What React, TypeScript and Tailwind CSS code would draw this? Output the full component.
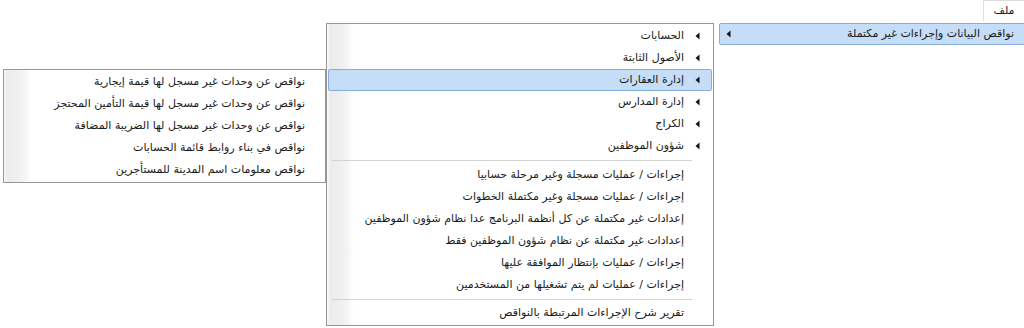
import React from "react";

const Arrow = () => (
  <svg width="5" height="8" viewBox="0 0 5 8" className="block">
    <path d="M4.5 0.5 L0.5 4 L4.5 7.5 Z" fill="#111" />
  </svg>
);

const level2Top = [
  "الحسابات",
  "الأصول الثابتة",
  "إدارة العقارات",
  "إدارة المدارس",
  "الكراج",
  "شؤون الموظفين",
];

const level2Mid = [
  "إجراءات / عمليات مسجلة وغير مرحلة حسابيا",
  "إجراءات / عمليات مسجلة وغير مكتملة الخطوات",
  "إعدادات غير مكتملة عن كل أنظمة البرنامج عدا نظام شؤون الموظفين",
  "إعدادات غير مكتملة عن نظام شؤون الموظفين فقط",
  "إجراءات / عمليات بإنتظار الموافقة عليها",
  "إجراءات / عمليات لم يتم تشغيلها من المستخدمين",
];

const level3 = [
  "نواقص عن وحدات غير مسجل لها قيمة إيجارية",
  "نواقص عن وحدات غير مسجل لها قيمة التأمين المحتجز",
  "نواقص عن وحدات غير مسجل لها الضريبة المضافة",
  "نواقص في بناء روابط قائمة الحسابات",
  "نواقص معلومات اسم المدينة للمستأجرين",
];

const gutter =
  "bg-[linear-gradient(to_right,#fafafa_0px,#ececec_3px,#efefef_14px,#f6f6f6_22px,#ffffff_26px)]";

export default function App() {
  return (
    <div
      className="relative w-[1024px] h-[328px] bg-white overflow-hidden text-[11px] text-[#1a1a1a]"
      style={{ fontFamily: '"DejaVu Sans", Tahoma, sans-serif' }}
    >
      {/* menu bar */}
      <div className="flex justify-end">
        <div className="w-[41px] h-[21px] border-t border-l border-[#dedede] flex items-center justify-center pt-px" dir="rtl">
          ملف
        </div>
      </div>

      {/* level 1 */}
      <div className="absolute left-[719px] top-[23px] w-[310px]" dir="rtl">
        <div className="h-[22px] bg-[#c5ddf6] border border-[#86aedd] rounded-[2px] flex items-center pr-[14px] pl-[6px]">
          <span className="flex-1">نواقص البيانات وإجراءات غير مكتملة</span>
          <Arrow />
        </div>
      </div>

      {/* level 2 */}
      <div
        className={`absolute left-[326px] top-[23px] w-[388px] border border-[#979797] bg-white ${gutter} p-[1px]`}
        dir="rtl"
      >
        {level2Top.map((t, i) => (
          <div
            key={t}
            className={
              i === 2
                ? "h-[22px] flex items-center border border-[#86aedd] bg-[#c5ddf6] rounded-[2px]"
                : "h-[22px] flex items-center border border-transparent"
            }
          >
            <div className="w-[27px] flex justify-center shrink-0">
              <Arrow />
            </div>
            <span>{t}</span>
          </div>
        ))}
        <div className="h-[7px] flex items-center pl-[4px] pr-[20px]">
          <div className="h-px w-full bg-[#d2d2d2]" />
        </div>
        {level2Mid.map((t) => (
          <div key={t} className="h-[22px] flex items-center pr-[28px]">
            <span>{t}</span>
          </div>
        ))}
        <div className="h-[6px] flex items-center pl-[4px] pr-[20px]">
          <div className="h-px w-full bg-[#d2d2d2]" />
        </div>
        <div className="h-[22px] flex items-center pr-[28px]">
          <span>تقرير شرح الإجراءات المرتبطة بالنواقص</span>
        </div>
      </div>

      {/* level 3 */}
      <div
        className={`absolute left-[3px] top-[69px] w-[323px] border border-[#979797] bg-white ${gutter} p-[1px]`}
        dir="rtl"
      >
        {level3.map((t) => (
          <div key={t} className="h-[22px] flex items-center pr-[19px]">
            <span>{t}</span>
          </div>
        ))}
      </div>
    </div>
  );
}
